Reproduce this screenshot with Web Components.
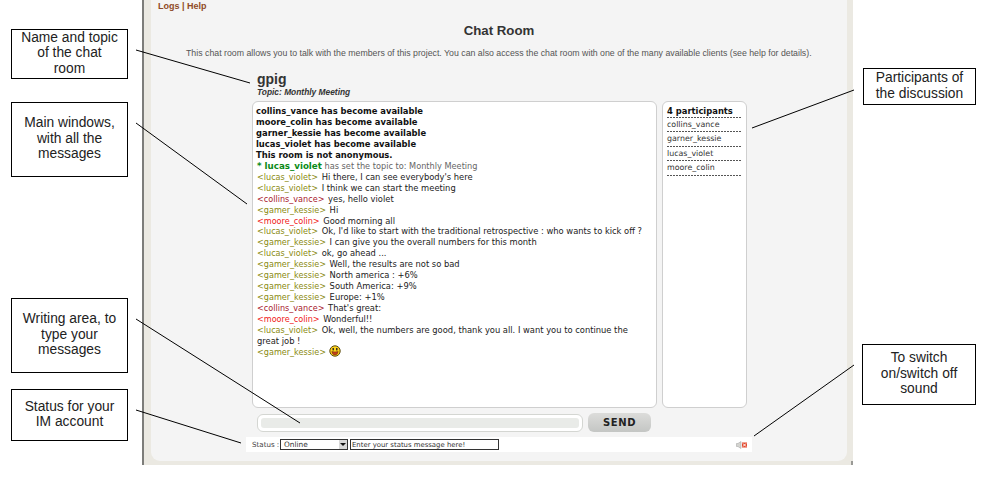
<!DOCTYPE html>
<html>
<head>
<meta charset="utf-8">
<title>Chat Room</title>
<style>
  html, body { margin: 0; padding: 0; background: #fff; overflow: hidden; }
  body { width: 1002px; height: 478px; position: relative; font-family: "Liberation Sans", Arial, sans-serif; }
</style>
</head>
<body>
<room-panel>
  <chat-log>
    <chat-line notice>collins_vance has become available</chat-line>
    <chat-line notice>moore_colin has become available</chat-line>
    <chat-line notice>garner_kessie has become available</chat-line>
    <chat-line notice>lucas_violet has become available</chat-line>
    <chat-line notice>This room is not anonymous.</chat-line>
    <chat-line topic nick="* lucas_violet">has set the topic to: Monthly Meeting</chat-line>
    <chat-line nick="lucas_violet" tone="olive">Hi there, I can see everybody's here</chat-line>
    <chat-line nick="lucas_violet" tone="olive">I think we can start the meeting</chat-line>
    <chat-line nick="collins_vance" tone="maroon">yes, hello violet</chat-line>
    <chat-line nick="gamer_kessie" tone="olive">Hi</chat-line>
    <chat-line nick="moore_colin" tone="red">Good morning all</chat-line>
    <chat-line nick="lucas_violet" tone="olive">Ok, I'd like to start with the traditional retrospective : who wants to kick off ?</chat-line>
    <chat-line nick="gamer_kessie" tone="olive">I can give you the overall numbers for this month</chat-line>
    <chat-line nick="lucas_violet" tone="olive">ok, go ahead ...</chat-line>
    <chat-line nick="gamer_kessie" tone="olive">Well, the results are not so bad</chat-line>
    <chat-line nick="gamer_kessie" tone="olive">North america : +6%</chat-line>
    <chat-line nick="gamer_kessie" tone="olive">South America: +9%</chat-line>
    <chat-line nick="gamer_kessie" tone="olive">Europe: +1%</chat-line>
    <chat-line nick="collins_vance" tone="maroon">That's great:</chat-line>
    <chat-line nick="moore_colin" tone="red">Wonderful!!</chat-line>
    <chat-line nick="lucas_violet" tone="olive">Ok, well, the numbers are good, thank you all. I want you to continue the great job !</chat-line>
    <chat-line nick="gamer_kessie" tone="olive"><smiley-face></smiley-face></chat-line>
  </chat-log>
</room-panel>

<note-box style="left:11px;top:29px;width:115px;height:48px">Name and topic<br>of the chat<br>room</note-box>
<note-box style="left:11px;top:102px;width:115px;height:73px">Main windows,<br>with all the<br>messages</note-box>
<note-box style="left:11px;top:298px;width:115px;height:73px">Writing area, to<br>type your<br>messages</note-box>
<note-box style="left:11px;top:389px;width:115px;height:50px">Status for your<br>IM account</note-box>
<note-box style="left:863px;top:68px;width:111px;height:35px">Participants of<br>the discussion</note-box>
<note-box style="left:862px;top:344px;width:112px;height:59px">To switch<br>on/switch off<br>sound</note-box>
<note-lines></note-lines>

<script>
class RoomPanel extends HTMLElement {
  constructor() {
    super();
    this.attachShadow({ mode: 'open' });
    this.shadowRoot.innerHTML = `
      <style>
        :host {
          display: block;
          position: relative;
          box-sizing: border-box;
          width: 711px;
          height: 465px;
          margin-left: 142px;
          border-left: 2px solid #7d7d7a;
          background: #ebe9e2;
          padding-right: 6px;
          padding-bottom: 4px;
          padding-left: 7px;
          font-family: "Liberation Sans", Arial, sans-serif;
        }
        :host::after {
          content: "";
          position: absolute;
          right: 0;
          bottom: 0;
          width: 2px;
          height: 4px;
          background: #9a9a96;
        }
        .inner {
          box-sizing: border-box;
          height: 100%;
          background: #f4f4f4;
          border-radius: 0 0 9px 9px;
          padding-left: 7px;
          display: flex;
          flex-direction: column;
        }
        .links {
          font-size: 9px;
          font-weight: bold;
          line-height: 12px;
          color: #8f4a26;
          height: 12px;
        }
        h1 {
          margin: 11px 0 0;
          font-size: 13.25px;
          line-height: 15px;
          color: #333;
          text-align: center;
          width: 682px;
        }
        .intro {
          margin: 9px 0 0;
          padding-left: 28px;
          font-size: 8.78px;
          line-height: 12px;
          color: #555;
          white-space: nowrap;
        }
        .room { margin: 13px 0 0 99px; color: #333; }
        .room b { display: block; font-size: 14px; line-height: 15px; }
        .room i { display: block; font-size: 8.4px; line-height: 10px; font-weight: bold; }
        .cols {
          display: flex;
          gap: 5px;
          margin: 4px 0 0 94px;
          height: 307px;
        }
      </style>
      <div class="inner">
        <div class="links">Logs | Help</div>
        <h1>Chat Room</h1>
        <p class="intro">This chat room allows you to talk with the members of this project. You can also access the chat room with one of the many available clients (see help for details).</p>
        <div class="room"><b>gpig</b><i>Topic: Monthly Meeting</i></div>
        <div class="cols">
          <slot></slot>
          <user-list></user-list>
        </div>
        <compose-row></compose-row>
        <status-bar></status-bar>
      </div>
    `;
  }
}

class ChatLog extends HTMLElement {
  constructor() {
    super();
    this.attachShadow({ mode: 'open' });
    this.shadowRoot.innerHTML = `
      <style>
        :host {
          display: block;
          box-sizing: border-box;
          width: 405px;
          height: 307px;
          background: #fff;
          border: 1px solid #cfcfcf;
          border-radius: 6px;
          padding: 4px 8px 0 3px;
          font-family: "DejaVu Sans", Verdana, sans-serif;
          font-size: 8.35px;
          line-height: 10.95px;
          color: #222;
        }
      </style>
      <slot></slot>
    `;
  }
}

class ChatLine extends HTMLElement {
  constructor() {
    super();
    this.attachShadow({ mode: 'open' });
    const nick = this.getAttribute('nick');
    const isTopic = this.hasAttribute('topic');
    let prefix = '';
    if (isTopic) prefix = `<span class="topic-nick">${nick}</span> `;
    else if (nick) prefix = `<span class="${this.getAttribute('tone')}">&lt;${nick}&gt;</span> `;
    this.shadowRoot.innerHTML = `
      <style>
        :host { display: block; margin-left: 1px; }
        :host([notice]) { font-weight: bold; color: #111; margin-left: 0; font-size: 8.4px; }
        :host([topic]) { color: #666; font-size: 8.2px; }
        span { line-height: 0; }
        .topic-nick { font-weight: bold; color: #0a8a16; font-size: 8.7px; }
        .olive, .maroon, .red { font-size: 8.1px; margin-right: 1px; }
        .olive { color: #8a8a10; }
        .maroon { color: #a8202c; }
        .red { color: #f01818; }
      </style>
      ${prefix}<slot></slot>
    `;
  }
}

class SmileyFace extends HTMLElement {
  constructor() {
    super();
    this.attachShadow({ mode: 'open' });
    this.shadowRoot.innerHTML = `
      <style>
        :host { display: inline-block; width: 12px; height: 6px; vertical-align: 0; margin-left: -1px; position: relative; }
        svg { display: block; position: absolute; left: 0; top: -4px; }
      </style>
      <svg width="12" height="12" viewBox="0 0 12 12">
        <circle cx="6" cy="6" r="5.2" fill="#ffd21a" stroke="#5a4a10" stroke-width="1"/>
        <rect x="3.5" y="3" width="1.4" height="2.4" fill="#222"/>
        <rect x="7.1" y="3" width="1.4" height="2.4" fill="#222"/>
        <path d="M2.8 6.6 Q6 7.4 9.2 6.6 Q8.6 10 6 10 Q3.4 10 2.8 6.6Z" fill="#c8401a" stroke="#5a2a10" stroke-width=".5"/>
      </svg>
    `;
  }
}

class UserList extends HTMLElement {
  constructor() {
    super();
    this.attachShadow({ mode: 'open' });
    const names = ['collins_vance', 'garner_kessie', 'lucas_violet', 'moore_colin'];
    this.shadowRoot.innerHTML = `
      <style>
        :host {
          display: block;
          box-sizing: border-box;
          width: 85px;
          height: 307px;
          background: #fff;
          border: 1px solid #cfcfcf;
          border-radius: 6px;
          padding: 4px 4px 0 4px;
          font-family: "DejaVu Sans", Verdana, sans-serif;
        }
        .head, .row {
          background: repeating-linear-gradient(90deg, #555 0 2px, transparent 2px 3px) left bottom / 100% 1px no-repeat;
          padding-bottom: 1px;
        }
        .head {
          font-size: 8.4px;
          font-weight: bold;
          line-height: 11px;
          color: #111;
        }
        .row {
          font-size: 7.9px;
          line-height: 13.4px;
          color: #333;
        }
      </style>
      <div class="head">4 participants</div>
      ${names.map((n) => `<div class="row">${n}</div>`).join('')}
    `;
  }
}

class ComposeRow extends HTMLElement {
  constructor() {
    super();
    this.attachShadow({ mode: 'open' });
    this.shadowRoot.innerHTML = `
      <style>
        :host {
          display: flex;
          align-items: center;
          gap: 5px;
          margin: 5px 0 0 99px;
          height: 19px;
        }
        .field {
          box-sizing: border-box;
          width: 326px;
          height: 18px;
          background: #fff;
          border: 1px solid #d4d6d2;
          border-radius: 6px;
          padding: 3px 3px;
        }
        .field div { height: 100%; background: #e9ebe8; border-radius: 3px; }
        .send {
          width: 63px;
          height: 19px;
          border-radius: 6px;
          background: linear-gradient(#dcdcda, #c4c6c4);
          text-align: center;
          font-family: "DejaVu Sans", Verdana, sans-serif;
          font-size: 10px;
          font-weight: bold;
          letter-spacing: .6px;
          line-height: 19px;
          color: #222;
        }
      </style>
      <div class="field"><div></div></div>
      <div class="send">SEND</div>
    `;
  }
}

class StatusBar extends HTMLElement {
  constructor() {
    super();
    this.attachShadow({ mode: 'open' });
    this.shadowRoot.innerHTML = `
      <style>
        :host {
          display: flex;
          align-items: center;
          box-sizing: border-box;
          width: 506px;
          height: 15px;
          margin: 5px 0 0 88px;
          padding-left: 6px;
          background: #fff;
          font-family: "DejaVu Sans", Verdana, sans-serif;
          font-size: 7.4px;
          color: #444;
        }
        .label { width: 28px; white-space: nowrap; font-size: 7.1px; }
        .select {
          box-sizing: border-box;
          display: flex;
          align-items: center;
          justify-content: space-between;
          width: 68px;
          height: 11px;
          border: 1px solid #333;
          padding-left: 3px;
          color: #333;
        }
        .arrow {
          width: 8px;
          height: 9px;
          background: #d8d8d8;
          display: flex;
          align-items: center;
          justify-content: center;
        }
        .arrow::after {
          content: "";
          border: 3px solid transparent;
          border-top: 3px solid #111;
          border-bottom: 0;
        }
        .msg {
          box-sizing: border-box;
          width: 149px;
          height: 11px;
          margin-left: 2px;
          border: 1px solid #333;
          padding: 1px 0 0 1px;
          font-size: 6.9px;
          line-height: 9px;
          color: #333;
          white-space: nowrap;
        }
        svg { margin-left: auto; margin-right: 5px; display: block; }
      </style>
      <span class="label">Status :</span>
      <div class="select">Online<span class="arrow"></span></div>
      <div class="msg">Enter your status message here!</div>
      <svg width="11" height="8" viewBox="0 0 11 8">
        <path d="M0.5 2.5H2L5 .5V7.5L2 5.5H.5Z" fill="#d4d4d0" stroke="#aaa" stroke-width=".6"/>
        <rect x="6" y="1.5" width="5" height="5" fill="#e2492e"/>
        <path d="M7 2.5L10 5.5M10 2.5L7 5.5" stroke="#fff" stroke-width="1"/>
      </svg>
    `;
  }
}

class NoteBox extends HTMLElement {
  constructor() {
    super();
    this.attachShadow({ mode: 'open' });
    this.shadowRoot.innerHTML = `
      <style>
        :host {
          position: absolute;
          display: block;
          box-sizing: content-box;
          background: #fff;
          border: 1px solid #000;
          font-family: "Liberation Sans", Arial, sans-serif;
          font-size: 13.8px;
          line-height: 15.5px;
          color: #222;
          text-align: center;
        }
        .wrap { box-sizing: border-box; height: 100%; padding-bottom: 2px; display: flex; align-items: center; justify-content: center; }
      </style>
      <div class="wrap"><div><slot></slot></div></div>
    `;
  }
}

class NoteLines extends HTMLElement {
  constructor() {
    super();
    this.attachShadow({ mode: 'open' });
    const lines = [
      [136, 50, 250, 83],
      [136, 123, 247, 204],
      [136, 319, 300, 423],
      [136, 410, 241, 443],
      [752, 128, 854, 90],
      [754, 436, 854, 365],
    ];
    this.shadowRoot.innerHTML = `
      <style>
        :host { position: absolute; left: 0; top: 0; display: block; pointer-events: none; }
        svg { display: block; }
      </style>
      <svg width="1002" height="478">
        ${lines.map(([a, b, c, d]) => `<line x1="${a}" y1="${b}" x2="${c}" y2="${d}" stroke="#000" stroke-width="1"/>`).join('')}
      </svg>
    `;
  }
}

customElements.define('room-panel', RoomPanel);
customElements.define('chat-log', ChatLog);
customElements.define('chat-line', ChatLine);
customElements.define('smiley-face', SmileyFace);
customElements.define('user-list', UserList);
customElements.define('compose-row', ComposeRow);
customElements.define('status-bar', StatusBar);
customElements.define('note-box', NoteBox);
customElements.define('note-lines', NoteLines);
</script>
</body>
</html>
